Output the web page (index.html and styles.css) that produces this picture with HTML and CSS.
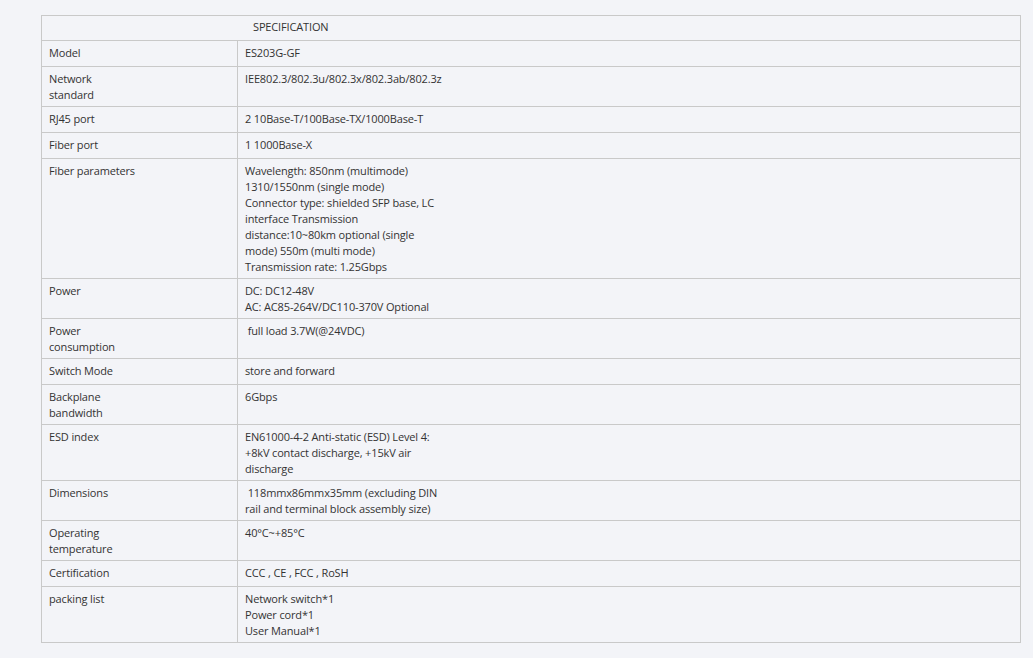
FILE: index.html
```html
<!DOCTYPE html>
<html>
<head>
<meta charset="utf-8">
<link rel="stylesheet" href="styles.css">
</head>
<body>
<div class="page">
<table class="spec">
<tr><td class="head" colspan="2">SPECIFICATION</td></tr>
<tr><td class="k">Model</td><td>ES203G-GF</td></tr>
<tr><td class="k">Network<br>standard</td><td>IEE802.3/802.3u/802.3x/802.3ab/802.3z</td></tr>
<tr><td class="k">RJ45 port</td><td>2 10Base-T/100Base-TX/1000Base-T</td></tr>
<tr><td class="k">Fiber port</td><td>1 1000Base-X</td></tr>
<tr><td class="k">Fiber parameters</td><td>Wavelength: 850nm (multimode)<br>1310/1550nm (single mode)<br>Connector type: shielded SFP base, LC<br>interface Transmission<br>distance:10~80km optional (single<br>mode) 550m (multi mode)<br>Transmission rate: 1.25Gbps</td></tr>
<tr><td class="k">Power</td><td>DC: DC12-48V<br>AC: AC85-264V/DC110-370V Optional</td></tr>
<tr><td class="k">Power<br>consumption</td><td>&nbsp;full load 3.7W(@24VDC)</td></tr>
<tr><td class="k">Switch Mode</td><td>store and forward</td></tr>
<tr><td class="k">Backplane<br>bandwidth</td><td>6Gbps</td></tr>
<tr><td class="k">ESD index</td><td>EN61000-4-2 Anti-static (ESD) Level 4:<br>+8kV contact discharge, +15kV air<br>discharge</td></tr>
<tr><td class="k">Dimensions</td><td>&nbsp;118mmx86mmx35mm (excluding DIN<br>rail and terminal block assembly size)</td></tr>
<tr><td class="k">Operating<br>temperature</td><td>40°C~+85°C</td></tr>
<tr><td class="k">Certification</td><td>CCC , CE , FCC , RoSH</td></tr>
<tr><td class="k">packing list</td><td>Network switch*1<br>Power cord*1<br>User Manual*1</td></tr>
</table>
</div>
</body>
</html>
```
FILE: styles.css
```css
html, body {
  margin: 0;
  padding: 0;
  background: #f3f4f8;
}
.page {
  padding: 15px 0 0 41px;
}
.spec {
  width: 980px;
  border-collapse: collapse;
  font-family: "Open Sans", "Liberation Sans", sans-serif;
  font-size: 11px;
  letter-spacing: -0.15px;
  line-height: 16px;
  color: #333;
}
.spec td {
  border: 1px solid #c9c9c9;
  padding: 4px 7px 3px 7px;
  height: 18px;
  vertical-align: top;
  text-align: left;
}
.spec td.k {
  width: 181px;
}
.spec td.head {
  padding-left: 211px;
  padding-top: 3px;
}
```
